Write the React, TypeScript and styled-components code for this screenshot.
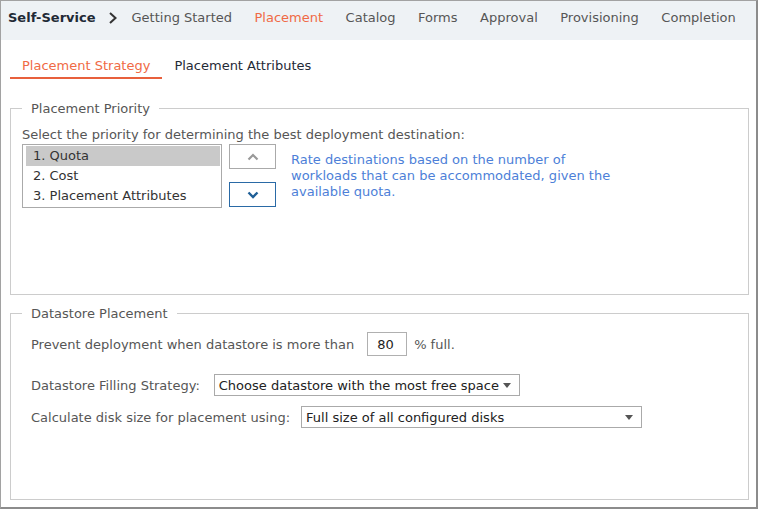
import React from 'react';
import styled, { createGlobalStyle } from 'styled-components';

const GlobalStyle = createGlobalStyle`
  html, body { margin: 0; padding: 0; background: #ffffff; }
  body { font-family: "DejaVu Sans", Verdana, sans-serif; font-size: 13px; color: #565656; }
`;

const steps = ['Getting Started', 'Placement', 'Catalog', 'Forms', 'Approval', 'Provisioning', 'Completion'];
const priorities = ['1. Quota', '2. Cost', '3. Placement Attributes'];

export default function App() {
  return (
    <Frame>
      <GlobalStyle />
      <Header>
        <Brand>Self-Service</Brand>
        <Chevron viewBox="0 0 10 14" width="10" height="14">
          <path d="M2 2 L7.5 7 L2 12" fill="none" stroke="#333" strokeWidth="2" />
        </Chevron>
        {steps.map((s) => (
          <Step key={s} active={s === 'Placement'}>{s}</Step>
        ))}
      </Header>
      <Body>
        <Tabs>
          <Tab active>Placement Strategy</Tab>
          <Tab>Placement Attributes</Tab>
        </Tabs>

        <Group height={194}>
          <Legend>Placement Priority</Legend>
          <Prompt>Select the priority for determining the best deployment destination:</Prompt>
          <PriorityRow>
            <ListBox>
              {priorities.map((p, i) => (
                <ListItem key={p} selected={i === 0}>{p}</ListItem>
              ))}
            </ListBox>
            <MoveButtons>
              <MoveButton>
                <svg viewBox="0 0 12 8" width="12" height="8">
                  <path d="M1.5 6.5 L6 2 L10.5 6.5" fill="none" stroke="#999" strokeWidth="2.2" />
                </svg>
              </MoveButton>
              <MoveButton primary>
                <svg viewBox="0 0 12 8" width="12" height="8">
                  <path d="M1.5 1.5 L6 6 L10.5 1.5" fill="none" stroke="#1f5f97" strokeWidth="2.4" />
                </svg>
              </MoveButton>
            </MoveButtons>
            <Hint>
              Rate destinations based on the number of workloads that can be accommodated, given the available quota.
            </Hint>
          </PriorityRow>
        </Group>

        <Group height={194} second>
          <Legend>Datastore Placement</Legend>
          <FieldRow top={11}>
            <Label gap={13}>Prevent deployment when datastore is more than</Label>
            <NumberBox>80</NumberBox>
            <Label gap={0}>% full.</Label>
          </FieldRow>
          <FieldRow top={18}>
            <Label gap={14}>Datastore Filling Strategy:</Label>
            <Select width={306}>
              <span>Choose datastore with the most free space</span>
              <Caret />
            </Select>
          </FieldRow>
          <FieldRow top={10}>
            <Label gap={11}>Calculate disk size for placement using:</Label>
            <Select width={341}>
              <span>Full size of all configured disks</span>
              <Caret />
            </Select>
          </FieldRow>
        </Group>
      </Body>
    </Frame>
  );
}

const Frame = styled.div`
  width: 758px;
  height: 509px;
  box-sizing: border-box;
  border: 1px solid #a2a2a2;
  border-right: 2px solid #8c8c8c;
  border-bottom: 2px solid #8c8c8c;
  display: flex;
  flex-direction: column;
  overflow: hidden;
`;

const Header = styled.div`
  height: 39px;
  flex-shrink: 0;
  background: #eef2f5;
  display: flex;
  align-items: center;
  padding-left: 7px;
  padding-bottom: 6px;
  box-sizing: border-box;
  white-space: nowrap;
  overflow: hidden;
`;

const Brand = styled.div`
  font-weight: bold;
  color: #1f2a36;
  flex-shrink: 0;
`;

const Chevron = styled.svg`
  margin: 1px 14px 0 12px;
  flex-shrink: 0;
`;

const Step = styled.div<{ active?: boolean }>`
  color: ${(p) => (p.active ? '#f06a45' : '#565656')};
  margin-right: 22.5px;
  flex-shrink: 0;
`;

const Body = styled.div`
  flex: 1;
  display: flex;
  flex-direction: column;
  padding: 0 7px 0 9px;
`;

const Tabs = styled.div`
  display: flex;
  height: 39px;
  align-items: flex-end;
  margin-bottom: 22px;
`;

const Tab = styled.div<{ active?: boolean }>`
  padding: 0 12px 4px 12px;
  color: ${(p) => (p.active ? '#f06a45' : '#1f2a36')};
  border-bottom: 2px solid ${(p) => (p.active ? '#e8603c' : 'transparent')};
`;

const Group = styled.fieldset<{ height: number; second?: boolean }>`
  margin: ${(p) => (p.second ? '11px' : '0')} 0 0 0;
  height: ${(p) => p.height}px;
  box-sizing: border-box;
  border: 1px solid #cccccc;
  padding: 0 11px 0 11px;
  min-width: 0;
`;

const Legend = styled.legend`
  margin-left: 0;
  padding: 0 9px 0 9px;
  color: #565656;
`;

const Prompt = styled.div`
  margin-top: 11px;
  color: #565656;
`;

const PriorityRow = styled.div`
  display: flex;
  align-items: flex-start;
  margin-top: 2px;
`;

const ListBox = styled.div`
  width: 200px;
  height: 64px;
  box-sizing: border-box;
  border: 1px solid #aaaaaa;
  padding: 1px 1px 0 3px;
`;

const ListItem = styled.div<{ selected?: boolean }>`
  height: 20px;
  line-height: 20px;
  padding-left: 7px;
  color: #333333;
  background: ${(p) => (p.selected ? '#c9c9c9' : 'transparent')};
`;

const MoveButtons = styled.div`
  display: flex;
  flex-direction: column;
  gap: 13px;
  margin-left: 7px;
`;

const MoveButton = styled.div<{ primary?: boolean }>`
  width: 47px;
  height: 25px;
  box-sizing: border-box;
  border: 1px solid ${(p) => (p.primary ? '#2a6aa6' : '#aaaaaa')};
  display: flex;
  align-items: center;
  justify-content: center;
`;

const Hint = styled.div`
  width: 330px;
  margin: 8px 0 0 15px;
  color: #4d7fd8;
  line-height: 16px;
`;

const FieldRow = styled.div<{ top: number }>`
  display: flex;
  align-items: center;
  margin-top: ${(p) => p.top}px;
  padding-left: 9px;
`;

const Label = styled.span<{ gap: number }>`
  color: #565656;
  margin-right: ${(p) => p.gap}px;
`;

const NumberBox = styled.div`
  width: 40px;
  height: 24px;
  box-sizing: border-box;
  border: 1px solid #b0b0b0;
  display: flex;
  align-items: center;
  padding-left: 9px;
  color: #222;
  margin-right: 7px;
`;

const Select = styled.div<{ width: number }>`
  width: ${(p) => p.width}px;
  height: 22px;
  box-sizing: border-box;
  border: 1px solid #aaaaaa;
  display: flex;
  align-items: center;
  justify-content: space-between;
  padding: 0 8px 0 4px;
  color: #222;
`;

const Caret = styled.span`
  width: 0;
  height: 0;
  border-left: 4.5px solid transparent;
  border-right: 4.5px solid transparent;
  border-top: 5px solid #555;
`;
